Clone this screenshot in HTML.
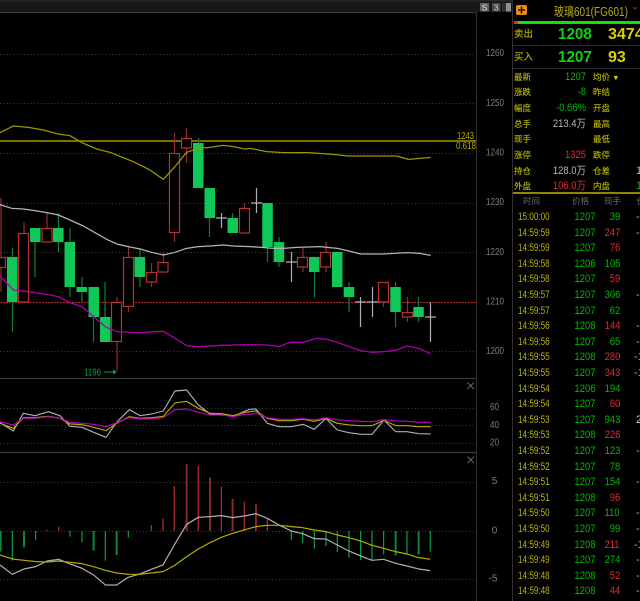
<!DOCTYPE html>
<html><head><meta charset="utf-8"><style>
html,body{margin:0;padding:0;background:#000;width:640px;height:601px;overflow:hidden}
body{position:relative;font-family:"Liberation Sans","Noto Sans CJK SC",sans-serif}
svg{position:absolute;left:0;top:0}
.ax{font:10px "Liberation Sans",sans-serif;fill:#7c7c7c;text-anchor:middle}
.t{position:absolute;white-space:nowrap;line-height:14px;height:14px}
.l{font-size:8.500px;color:#b4ac00;text-shadow:0 0 .4px #b4ac00}
.v{font-size:11px;text-align:right;width:70px;left:516px;transform:scaleX(.86);transform-origin:right}
.g{color:#00b800}.rd{color:#e02c30}.w{color:#b8b8b8}
.h{font-size:8.500px;color:#6a6a6a}
.r{position:absolute;left:513px;width:127px;height:14px;line-height:14px;font-size:11px}
.r i,.r b,.r u,.r s{position:absolute;font-style:normal;font-weight:normal;text-decoration:none;top:0;white-space:nowrap}
.r i{left:5px;color:#b8b010;font-size:11px;transform:scaleX(.74);transform-origin:left}
.r b{right:45px;transform:scaleX(.86);transform-origin:right;color:#00b800}
.r u{right:20px;transform:scaleX(.86);transform-origin:right}
.r s{left:123px;color:#aaa}
</style></head><body>
<svg width="640" height="601" viewBox="0 0 640 601">
<rect x="0" y="0" width="512" height="12" fill="#181818"/>
<rect x="0" y="0" width="512" height="1.500" fill="#262626"/>
<g stroke="#303030" stroke-width="1" fill="none">
<path d="M0 12.500H477" stroke="#383838"/>
<path d="M476.500 12V601"/>
<path d="M512.500 0V601"/>
<path d="M0 378.500H477M0 452.500H477" stroke="#3a3a3a" stroke-width="1.300"/>
</g>
<g stroke="#404040" stroke-width="1" stroke-dasharray="1 2.400" fill="none">
<path d="M0 54.500H476M0 103.500H476M0 153.500H476M0 203.500H476M0 252.500H476M0 351.500H476"/>
<path d="M0 408.500H476M0 425.500H476M0 443.500H476"/>
<path d="M0 482.500H476M0 531.500H476M0 579.500H476"/>
</g>
<path d="M0 302.500H477" stroke="#b02c2c" stroke-width="1.100" stroke-dasharray="2 1"/>
<path d="M0 141H476" stroke="#9c9600" stroke-width="1.500"/>

<!-- wicks -->
<g fill="none" stroke-width="1.200">
<g stroke="#8f2c2c">
<path d="M1 198V292M24 222V233M47 213V228M117 297V302M117 342V371M128.500 247V257M128.500 307V312M151.500 263V272M151.500 282V287M163.500 252V262M174.500 133V153M174.500 233V242M186.500 128V138M186.500 148V163M244.500 203V208M303 248V257M303 267V272M326 242V252M326 267V272M383.500 302V307M407.500 297V312M407.500 317V322"/>
</g>
<g stroke="#0a8034">
<path d="M12.500 248V257M12.500 302V332M35 242V277M58.500 213V228M58.500 242V252M70 228V242M70 287V297M82 277V287M82 292V302M93.500 317V342M105 282V317M140 248V257M140 277V287M198.500 138V143M209.500 218V237M232.500 213V218M267.500 247V262M279 237V242M279 262V267M314.500 272V297M349 282V287M349 297V312M395.500 282V287M395.500 312V327M418.500 297V307M418.500 317V322"/>
</g>
<g stroke="#b0b0b0">
<path d="M216 218H227M221.500 213V228M251 203H262M256.500 188V213M286 262H297M291.500 252V282M355 302H366M360.500 297V327M367 302H378M372.500 287V317M425 317H436M430.500 302V342"/>
</g>
</g>
<!-- green bodies -->
<g fill="#10c858">
<rect x="7" y="257" width="10.500" height="45"/>
<rect x="30" y="228" width="10.500" height="14"/>
<rect x="53" y="228" width="10.500" height="14"/>
<rect x="64.500" y="242" width="10.500" height="45"/>
<rect x="76.500" y="287" width="10.500" height="5"/>
<rect x="88.500" y="287" width="10.500" height="30"/>
<rect x="100" y="317" width="10.500" height="25"/>
<rect x="134.500" y="257" width="10.500" height="20"/>
<rect x="193" y="143" width="10.500" height="45"/>
<rect x="204.500" y="188" width="10.500" height="30"/>
<rect x="227.500" y="218" width="10.500" height="15"/>
<rect x="262.300" y="203" width="10.500" height="44"/>
<rect x="273.700" y="242" width="10.500" height="20"/>
<rect x="309" y="257" width="10.500" height="15"/>
<rect x="332" y="252" width="10.500" height="35"/>
<rect x="343.700" y="287" width="10.500" height="10"/>
<rect x="390.300" y="287" width="10.500" height="25"/>
<rect x="413.300" y="307" width="10.500" height="10"/>
</g>
<!-- red hollow bodies -->
<g fill="#000" stroke="#b83232" stroke-width="1.200">
<rect x="-4" y="257.500" width="9.500" height="10"/>
<rect x="18.500" y="233.500" width="10" height="68.500"/>
<rect x="42" y="228.500" width="10" height="13.500"/>
<rect x="111.500" y="302.500" width="10" height="39"/>
<rect x="123.500" y="257.500" width="10" height="49"/>
<rect x="146.500" y="272.500" width="10" height="9.500"/>
<rect x="158" y="262.500" width="10" height="9.500"/>
<rect x="169.500" y="153.500" width="10" height="79"/>
<rect x="181.500" y="138.500" width="10" height="9.500"/>
<rect x="239.500" y="208.500" width="10" height="24.500"/>
<rect x="297.500" y="257.500" width="10" height="9.500"/>
<rect x="320.500" y="252.500" width="10" height="14.500"/>
<rect x="378.500" y="282.500" width="10" height="19.500"/>
<rect x="402.500" y="312.500" width="10" height="4.500"/>
</g>

<!-- BOLL lines -->
<g fill="none" stroke-width="3.800" stroke-linejoin="round" transform="translate(0,120) scale(.3333)">
<polyline stroke="#9c9600" points="0,38 40,18 85,22 130,30 175,42 210,47 250,70 290,87 330,97 400,125 450,150 490,178 525,140 560,97 595,85 630,82 670,76 700,80 735,87 750,85"/>
<polyline stroke="#9c9600" transform="translate(750,0)" points="0,85 50,95 100,98 175,98 250,103 295,108 440,108 475,118 510,115 542,112"/>
<polyline stroke="#b4b4b4" points="0,254 35,265 70,267 105,272 140,278 175,285 210,300 250,318 285,338 320,358 350,372 385,380 420,387 455,397 490,405 525,397 560,385 595,380 630,378 670,375 700,378 750,380"/>
<polyline stroke="#b4b4b4" transform="translate(750,0)" points="0,380 35,382 70,385 100,385 140,382 210,380 262,385 297,393 332,402 400,402 470,398 510,400 542,406"/>
<polyline stroke="#ac00ac" points="0,468 40,510 70,513 105,518 140,523 175,530 210,548 246,560 281,590 316,620 350,635 420,638 490,634 525,655 560,677 595,680 665,676 750,674"/>
<polyline stroke="#ac00ac" transform="translate(750,0)" points="0,674 50,675 87,680 120,667 160,667 200,655 230,658 262,667 297,680 332,692 366,697 400,695 437,691 471,678 506,685 542,701"/>
</g>

<text x="84" y="375.500" font-family="Liberation Sans" font-size="10" fill="#0aa040" textLength="17" lengthAdjust="spacingAndGlyphs">1196</text>
<path d="M104 372H114" stroke="#0aa040"/><path d="M113 369.500L117 372L113 374.500Z" fill="#0aa040"/>
<text x="457" y="139" font-family="Liberation Sans" font-size="10" fill="#b4ac00" textLength="17" lengthAdjust="spacingAndGlyphs">1243</text>
<text x="456" y="149" font-family="Liberation Sans" font-size="10" fill="#b4ac00" textLength="20" lengthAdjust="spacingAndGlyphs">0.618</text>

<!-- KDJ lines -->
<g fill="none" stroke-width="3.400" stroke-linejoin="round" transform="translate(0,375) scale(.3333)">
<polyline stroke="#b0b0b0" points="0,143 40,168 70,115 105,122 145,110 180,122 210,154 246,157 281,172 318,187 350,142 388,104 420,122 455,117 490,108 525,48 560,45 595,90 630,117 665,117 700,125 735,108 750,103 768,102 802,145 837,155 874,155 910,148 943,163 978,130 1012,165 1047,173 1082,178 1116,178 1152,135 1187,170 1221,170 1256,176 1292,177"/>
<polyline stroke="#b4ac00" points="0,145 40,160 70,128 105,128 145,124 180,130 210,147 246,149 281,157 318,167 350,145 388,125 420,130 455,128 490,124 525,84 560,79 595,100 630,115 665,116 700,122 735,112 750,110 768,108 802,130 837,137 874,137 910,133 943,139 978,130 1012,145 1047,150 1082,152 1116,152 1152,136 1187,152 1221,152 1256,155 1292,155"/>
<polyline stroke="#c000c0" points="0,140 40,150 70,130 105,130 145,125 180,130 210,142 246,145 281,148 318,155 350,143 388,128 420,132 455,132 490,128 525,104 560,102 595,112 630,120 665,120 700,125 735,118 750,118 768,115 802,128 837,133 874,133 910,131 943,135 978,128 1012,134 1047,137 1082,139 1116,140 1152,134 1187,138 1221,139 1256,142 1292,142"/>
</g>

<!-- MACD bars -->
<g fill="none" transform="translate(0,375) scale(.3333)">
<g stroke="#0a8a38" stroke-width="6">
<path d="M2 468V530M72 468V517M281 468V527M350 468V540M1187 468V541M1256 468V538"/>
</g>
<g stroke="#0aa040" stroke-width="3.600">
<path d="M37 468V557M107 468V495M210 468V485M246 468V503M316 468V557M385 468V488"/>
<path d="M837 468V470M874 468V495M908 468V504M943 468V521M978 468V513M1012 468V531M1047 468V548M1082 468V555M1116 468V557M1151 468V538M1221 468V538M1291 468V530"/>
</g>
<g stroke="#b03030" stroke-width="3.600">
<path d="M141 468V464M176 468V455M454 468V450M489 468V430M523 468V333M595 468V273M664 468V336M733 468V380M802 468V432"/>
</g>
<g stroke="#8a2828" stroke-width="6">
<path d="M560 468V267M630 468V307M698 468V372"/>
</g>
<g stroke="#b03030" stroke-width="4.500"><path d="M768 468V387"/></g>
</g>
<!-- MACD lines -->
<g fill="none" stroke-width="3.600" stroke-linejoin="round" transform="translate(0,375) scale(.3333)">
<polyline stroke="#b0b0b0" points="0,570 37,598 72,582 107,575 141,558 176,553 210,567 246,580 281,600 316,630 350,630 385,607 420,597 454,583 489,570 523,510 560,448 595,427 630,425 664,422 698,428 733,423 768,416 802,430 837,450 874,468 908,476 943,491 978,492 1012,510 1047,528 1082,543 1116,556 1151,553 1187,565 1221,573 1256,582 1291,587"/>
<polyline stroke="#b4ac00" points="0,540 37,552 72,556 107,560 141,561 176,558 210,562 246,566 281,575 316,586 350,594 385,598 420,598 454,594 489,590 523,572 560,545 595,522 630,503 664,487 698,475 733,465 768,455 802,451 837,451 874,455 908,458 943,465 978,470 1012,480 1047,488 1082,498 1116,511 1151,520 1187,530 1221,537 1256,548 1291,553"/>
</g>

<!-- close X -->
<path d="M467.500 382.500L474 389M474 382.500L467.500 389M467.500 456.500L474 463M474 456.500L467.500 463" stroke="#666" fill="none"/>

<!-- axis -->
<text class="ax" x="495" y="56" textLength="18" lengthAdjust="spacingAndGlyphs">1260</text>
<text class="ax" x="495" y="106" textLength="18" lengthAdjust="spacingAndGlyphs">1250</text>
<text class="ax" x="495" y="155.500" textLength="18" lengthAdjust="spacingAndGlyphs">1240</text>
<text class="ax" x="495" y="205" textLength="18" lengthAdjust="spacingAndGlyphs">1230</text>
<text class="ax" x="495" y="255" textLength="18" lengthAdjust="spacingAndGlyphs">1220</text>
<text class="ax" x="495" y="304.500" textLength="18" lengthAdjust="spacingAndGlyphs">1210</text>
<text class="ax" x="495" y="354" textLength="18" lengthAdjust="spacingAndGlyphs">1200</text>
<text class="ax" x="494.500" y="410" textLength="9" lengthAdjust="spacingAndGlyphs">60</text>
<text class="ax" x="494.500" y="428" textLength="9" lengthAdjust="spacingAndGlyphs">40</text>
<text class="ax" x="494.500" y="445.500" textLength="9" lengthAdjust="spacingAndGlyphs">20</text>
<text class="ax" x="494.500" y="484">5</text>
<text class="ax" x="494.500" y="533.500">0</text>
<text class="ax" x="493" y="581.500">-5</text>

<!-- S 3 buttons -->
<rect x="480" y="3" width="9" height="8.500" fill="#606060"/>
<rect x="492" y="3" width="8.500" height="8.500" fill="#484848"/>
<rect x="502" y="3" width="9" height="8.500" fill="#909090"/>
<rect x="502" y="3" width="4" height="8.500" fill="#303030"/>
<text x="484.500" y="10.500" text-anchor="middle" font-family="Liberation Sans" font-size="8.500" fill="#e0e0e0">S</text>
<text x="496.200" y="10.500" text-anchor="middle" font-family="Liberation Sans" font-size="8.500" fill="#e0e0e0">3</text>

<!-- + button -->
<rect x="516" y="5" width="11" height="10" rx="2" fill="#ea8c10"/>
<path d="M521.500 6.500V13.500M518 10H525" stroke="#000" stroke-width="1.300"/>

<!-- top bar -->
<rect x="514" y="21" width="126" height="3" fill="#10e010"/>
<rect x="514" y="21" width="4" height="3" fill="#d83030"/>
<path d="M513 45.500H640M513 68.500H640" stroke="#2a2a2a"/>
<rect x="513" y="192" width="127" height="2" fill="#8f8a00"/>
<path d="M633 7L635 9L637 7" stroke="#c03030" fill="none" stroke-width="0.800"/>
</svg>

<div class="t" style="left:554px;top:5px;font-size:12.500px;color:#b8a818;transform:scaleX(.8);transform-origin:left">玻璃601(FG601)</div>

<div class="t l" style="left:514px;top:28px;font-size:9.500px">卖出</div>
<div class="t g" style="left:558px;top:27px;font-size:16px;font-weight:bold;color:#10d010;line-height:16px;height:16px;transform:scaleX(.95);transform-origin:left">1208</div>
<div class="t" style="left:608px;top:27px;font-size:16px;font-weight:bold;color:#d8d000;line-height:16px;height:16px">3474</div>
<div class="t l" style="left:514px;top:51px;font-size:9.500px">买入</div>
<div class="t g" style="left:558px;top:50px;font-size:16px;font-weight:bold;color:#10d010;line-height:16px;height:16px;transform:scaleX(.95);transform-origin:left">1207</div>
<div class="t" style="left:608px;top:50px;font-size:16px;font-weight:bold;color:#d8d000;line-height:16px;height:16px">93</div>

<div class="t l" style="left:514px;top:70px">最新</div><div class="t v g" style="top:70px">1207</div><div class="t l" style="left:593px;top:70px">均价 <span style="font-size:7px;color:#d8d000">▼</span></div>
<div class="t l" style="left:514px;top:85px">涨跌</div><div class="t v g" style="top:85px">-8</div><div class="t l" style="left:593px;top:85px">昨结</div>
<div class="t l" style="left:514px;top:101px">幅度</div><div class="t v g" style="top:101px">-0.66%</div><div class="t l" style="left:593px;top:101px">开盘</div>
<div class="t l" style="left:514px;top:117px">总手</div><div class="t v w" style="top:117px">213.4万</div><div class="t l" style="left:593px;top:117px">最高</div>
<div class="t l" style="left:514px;top:132px">现手</div><div class="t l" style="left:593px;top:132px">最低</div>
<div class="t l" style="left:514px;top:148px">涨停</div><div class="t v rd" style="top:148px">1325</div><div class="t l" style="left:593px;top:148px">跌停</div>
<div class="t l" style="left:514px;top:164px">持仓</div><div class="t v w" style="top:164px">128.0万</div><div class="t l" style="left:593px;top:164px">仓差</div>
<div class="t l" style="left:514px;top:179px">外盘</div><div class="t v rd" style="top:179px">106.0万</div><div class="t l" style="left:593px;top:179px">内盘</div>
<div class="t" style="left:636px;top:164px;font-size:11px;color:#b8b8b8">1</div>
<div class="t" style="left:636px;top:179px;font-size:11px;color:#00b800">1</div>

<div class="t h" style="left:523px;top:194px">时间</div>
<div class="t h" style="left:572px;top:194px">价格</div>
<div class="t h" style="left:604px;top:194px">现手</div>
<div class="t h" style="left:636px;top:194px">仓</div>

<div class="r" style="top:210px"><i>15:00:00</i><b>1207</b><u class="g">39</u><s>-</s></div>
<div class="r" style="top:225.600px"><i>14:59:59</i><b>1207</b><u class="rd">247</u><s>-</s></div>
<div class="r" style="top:241.200px"><i>14:59:59</i><b>1207</b><u class="rd">76</u></div>
<div class="r" style="top:256.800px"><i>14:59:58</i><b>1206</b><u class="g">105</u></div>
<div class="r" style="top:272.400px"><i>14:59:58</i><b>1207</b><u class="rd">59</u></div>
<div class="r" style="top:288px"><i>14:59:57</i><b>1207</b><u class="g">306</u><s>-</s></div>
<div class="r" style="top:303.600px"><i>14:59:57</i><b>1207</b><u class="g">62</u></div>
<div class="r" style="top:319.200px"><i>14:59:56</i><b>1208</b><u class="rd">144</u><s>-</s></div>
<div class="r" style="top:334.800px"><i>14:59:56</i><b>1207</b><u class="g">65</u><s>-</s></div>
<div class="r" style="top:350.400px"><i>14:59:55</i><b>1208</b><u class="rd">280</u><s style="left:121px">-1</s></div>
<div class="r" style="top:366px"><i>14:59:55</i><b>1207</b><u class="rd">343</u><s style="left:121px">-1</s></div>
<div class="r" style="top:381.600px"><i>14:59:54</i><b>1206</b><u class="g">194</u></div>
<div class="r" style="top:397.200px"><i>14:59:54</i><b>1207</b><u class="rd">60</u></div>
<div class="r" style="top:412.800px"><i>14:59:53</i><b>1207</b><u class="g">943</u><s style="left:123px;color:#ccc">2</s></div>
<div class="r" style="top:428.400px"><i>14:59:53</i><b>1208</b><u class="rd">226</u></div>
<div class="r" style="top:444px"><i>14:59:52</i><b>1207</b><u class="g">123</u><s>-</s></div>
<div class="r" style="top:459.600px"><i>14:59:52</i><b>1207</b><u class="g">78</u></div>
<div class="r" style="top:475.200px"><i>14:59:51</i><b>1207</b><u class="g">154</u><s>-</s></div>
<div class="r" style="top:490.800px"><i>14:59:51</i><b>1208</b><u class="rd">96</u></div>
<div class="r" style="top:506.400px"><i>14:59:50</i><b>1207</b><u class="g">110</u><s>-</s></div>
<div class="r" style="top:522px"><i>14:59:50</i><b>1207</b><u class="g">99</u><s>-</s></div>
<div class="r" style="top:537.600px"><i>14:59:49</i><b>1208</b><u class="rd">211</u><s style="left:121px">-1</s></div>
<div class="r" style="top:553.200px"><i>14:59:49</i><b>1207</b><u class="g">274</u><s>-</s></div>
<div class="r" style="top:568.800px"><i>14:59:48</i><b>1208</b><u class="rd">52</u><s>-</s></div>
<div class="r" style="top:584.400px"><i>14:59:48</i><b>1208</b><u class="rd">44</u><s>-</s></div>
</body></html>
